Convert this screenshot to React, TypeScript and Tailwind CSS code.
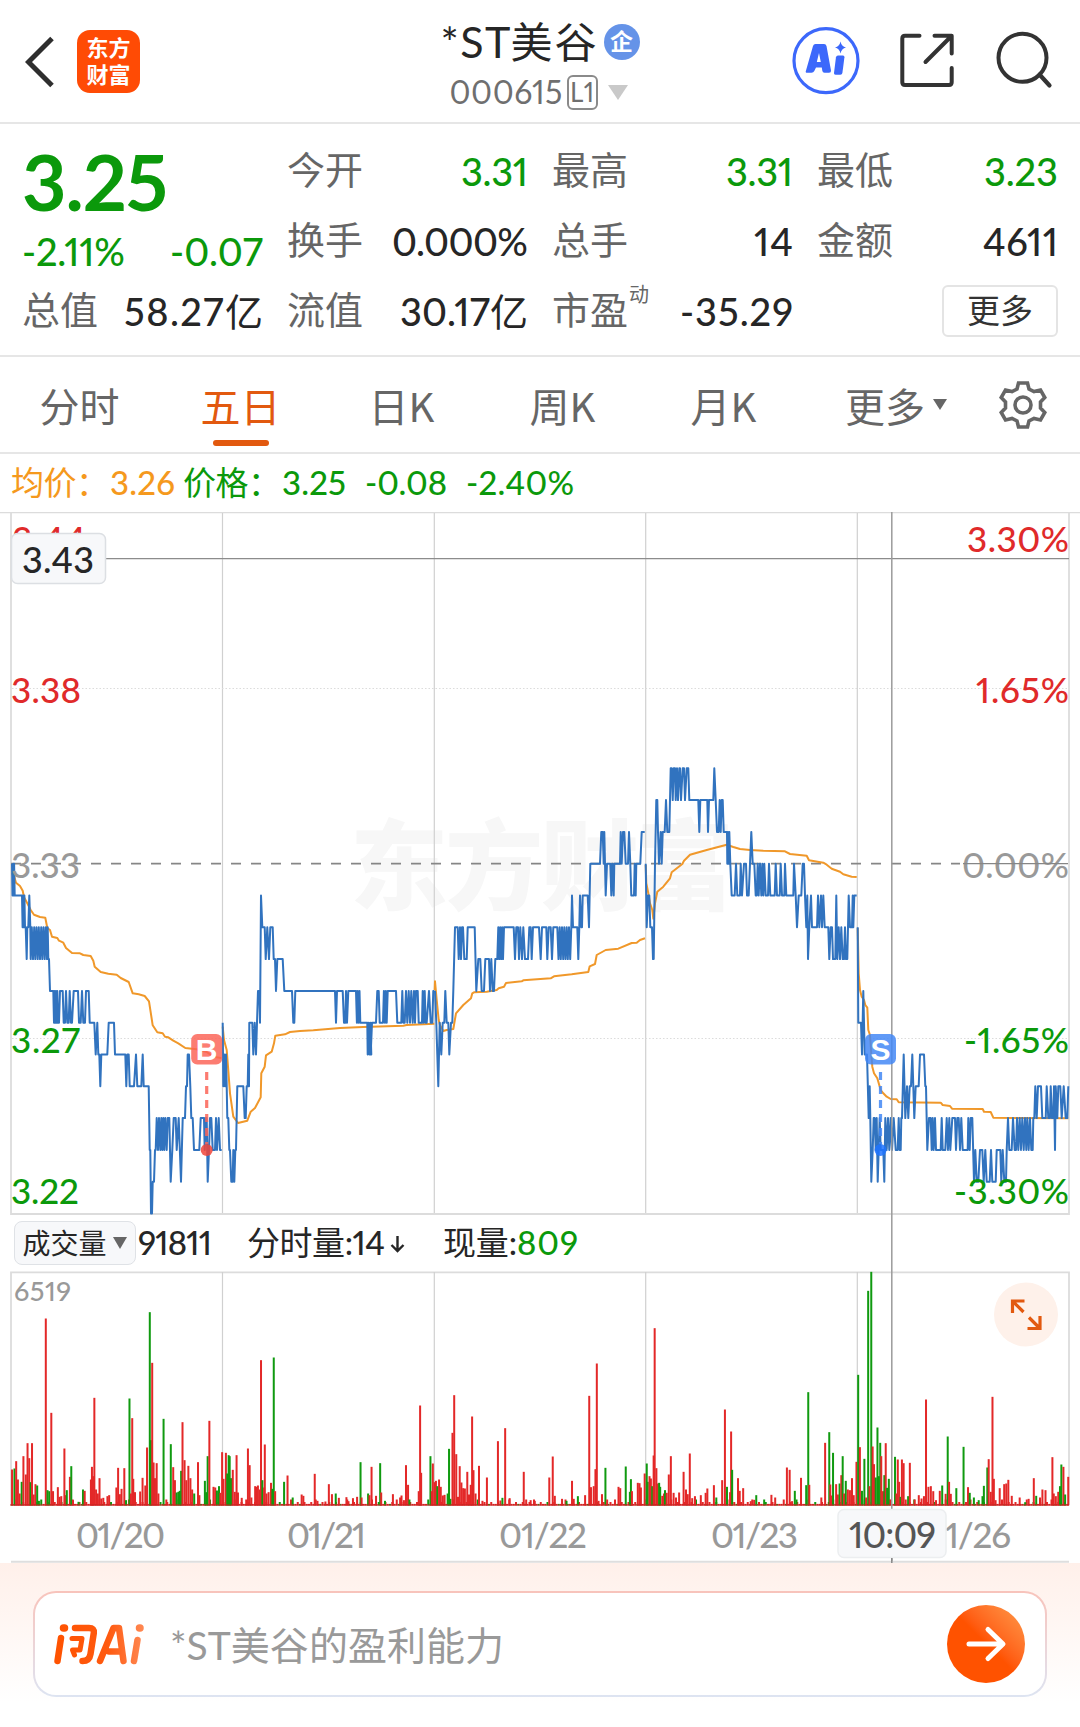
import { useLayoutEffect, useRef, type ReactNode } from 'react';

const NUM = "font-['Lato','Noto_Sans_CJK_SC',sans-serif] proportional-nums";

/* Single-line text tracked so that it fills a given width. */
function Fit({ w, weight = 'font-medium', className = '', children }: { w: number; weight?: string; className?: string; children: string }) {
  const ref = useRef<HTMLSpanElement>(null);
  useLayoutEffect(() => {
    const el = ref.current;
    if (!el) return;
    el.style.letterSpacing = '0px';
    el.style.marginRight = '0px';
    const gap = (w - el.getBoundingClientRect().width) / Math.max(1, children.length - 1);
    el.style.letterSpacing = `${gap}px`;
    el.style.marginRight = `${-gap}px`;
  }, [w, children]);
  return (
    <span ref={ref} className={`inline-block whitespace-pre ${NUM} ${weight} ${className}`}>
      {children.split(/([\u4e00-\u9fff：]+)/).map((part, i) => (i % 2 ? <span key={i} className="font-normal">{part}</span> : part))}
    </span>
  );
}

/* ---------- price series: [x, level], one level = 0.01 below 3.33 ---------- */
type P = [number, number];
const BASE = 863.7;
const STEP = 31.8;

const parse = (s: string): P[] => s.trim().split(/\s+/).map((t) => t.split(',').map(Number) as P);

const zig = (x0: number, x1: number, a: number, b: number, n: number) =>
  Array.from({ length: n + 1 }, (_, i) => `${(x0 + ((x1 - x0) * i) / n).toFixed(1)},${i % 2 ? b : a}`).join(' ');

const price: { o: number; d: string }[] = [
  {
    o: 0,
    d: `${zig(36, 44, 0, 1, 5)} 65,1 ${zig(66, 75, 1, 2, 5)} 77,2 80,3 82,2 85,2 88,1 91,2 ${zig(92, 141, 3, 2, 14)} 143,2 145,3 147,3 150,4 158,4
    ${zig(160, 174, 4, 5, 7)} 177,5 180,4 188,4 191,5 195,5 198,4 202,5 206,5 209,4 213,5 216,5 221,4 234,4 237,5 242,5 246,4 250,5 255,5 258,4 266,4 269,5 283,5 287,6 292,5 295,6 298,6 301,7 304,6 322,6 326,5 342,5 345,6
    376,6 379,7 382,6 386,6 389,7 402,7 408,6 412,7 424,7 428,6 431,7 446,7 449,9 451,9 453,11 456,11 458,10 462,10 465,9 467,9
    470,8 474,9 477,8 481,9 484,8 487,9 490,8 493,9 496,8 500,9 503,8 508,8 512,10 517,9 521,8 527,8 530,9 536,8 543,10 548,8 555,8 558,7 561,7 563,6 567,6 571,7 574,8 578,8 582,9
    598,9 602,8 612,8 614,9 617,8 620,8 623,10 627,9 630,8 634,8 638,9 645,9 648,8 651,9 656,8 660,9 665,9`,
  },
  {
    o: 0,
    d: `668,5 670,7 673,6 675,7 678,6 680,7 682,8 685,8 688,9 690,9 694,10 698,10 700,9 703,10 706,9 708,9 712,7 730,7 734,8 737,8 740,7 743,7 745,6 747,7 748,5 757,5 760,6 764,5 768,6 771,5 774,4 778,4 780,5 783,1 787,2
    794,2 797,3 802,2 807,3 811,2 818,2 821,3 825,3 828,4 832,3 848,3 853,4 876,4 880,5 883,5 886,4 1005,4 1008,5 1011,4 1028,4 1032,5 1036,5 1038,4 1041,5 1045,4 1067,4 ${zig(1068, 1081, 4, 5, 5)} 1082,5
    1102,5 ${zig(1103, 1114, 6, 5, 4)} 1112,6 1116,5 1128,5 1132,4 1136,4 1139,5 1148,5 ${zig(1149, 1163, 5, 4, 5)} 1188,4 1192,5 1204,5 1207,4 1210,5 1214,5 1218,4 1222,5 1226,4 1230,5 1234,4 1238,5 1242,4 1245,5 1248,4 1253,4 1256,5
    1266,5 1268,4 1271,5 1274,4 1277,5 1280,5 1287,4 1292,5 1297,5 1300,4 1303,4`,
  },
  {
    o: 690,
    d: `615,4 619,5 622,6 625,7 629,5 634,6 638,5 643,5 646,4 650,5 655,5 658,6 663,5 667,5 670,4 675,2 683,2 686,3 690,2 693,3 696,2 699,2 703,3 710,3 713,2 734,2 739,4 745,3 751,3 755,4 762,4 766,3 777,3 780,4 784,3 788,4 792,4 796,3 801,3
    ${zig(802, 822, 3, 2, 7)} 851,2 855,3 859,2 864,2 867,3 871,2 876,3 880,2 885,3 894,3 898,2 902,2 905,3 909,2 927,2 932,3 936,2 949,2 952,3 956,2 962,2 966,3 970,2 980,2
    ${zig(982, 1024, 2, 3, 12)} 1026,1 1029,2 1042,2 1045,3 1048,2 1050,1 1054,2 1056,2 1058,1 1073,1 1077,2 1081,0 1110,0 1114,-1 1118,-1 1121,0 1123,-1 1125,0 1127,1 1131,0 1141,0 1144,1 1147,0 1151,1 1153,0
    1170,0 1172,-1 1175,0 1179,-1 1183,-1 1187,0 1194,0 1197,-1 1201,0 1204,1 1212,1 1214,0 1217,1 1219,0 1231,0 1235,-1 1244,-1`,
  },
  {
    o: 1320,
    d: `617,0 620,2 624,1 628,1 631,2 636,2 639,3 641,3 645,0 649,-2 652,-2 654,-1 657,0 662,-1 665,0 668,-1 674,-1 678,-2 682,-1 688,-1 690,-2
    692,-3 695,-3 698,-2 701,-3 705,-3 707,-2 711,-3 714,-2 718,-3 720,-3 723,-2 728,-3 732,-3 735,-2 740,-3 745,-3 748,-2 775,-2 778,-1 781,-2 802,-2 804,-1 807,-2 820,-2 823,-3 827,-2 831,-1 836,-1 839,-2 842,-1 845,-2 848,-2 851,-1 861,-1 862,0 864,-1 866,0 868,-1 871,0 875,1 884,1 888,0 892,1 900,1 902,0 906,1
    912,0 918,0 921,1 926,1 930,0 934,-1 938,0 943,0 947,1 950,1 953,0 956,1 960,0 964,1 967,0 970,1 973,0 977,1 984,1 987,0 991,1 1004,1 1007,0 1011,1 1019,1 1022,0 1026,1 1033,1 1035,0 1039,1 1060,1 1062,0 1067,1 1071,2 1076,1
    1084,1 1088,0 1092,0 1095,1 1099,2 1102,1 1104,3 1108,2 1113,1 1116,2 1131,2 1134,1 1138,2 1143,1 1146,2 1150,1 1154,2 1165,2 1168,3 1172,2 1176,2 1179,3 1186,3 1189,1 1192,3 1196,2 1200,3 1204,2 1208,3 1212,3 1215,2 1218,3 1222,3
    1226,1 1230,2 1236,2 1238,1 1240,2 1243,1 1250,1`,
  },
  {
    o: 2460,
    d: `113,2 115,5 123,5 126,6 130,4 134,6 141,6 146,8 149,7 151,8 154,10 158,9 161,8 164,8 167,9 170,8 173,10 176,9 179,8 182,9 190,9 193,10 196,8 200,9 204,8 208,9 212,8 216,9 221,8 227,9 233,9 236,8 239,9 242,9 244,8 246,8 251,6
    256,8 261,7 265,8 269,7 273,7 277,6 283,8 287,7 296,7 300,6 312,6 316,7 318,7 322,9 327,8 332,8 335,9 338,8 341,9 345,8 348,9 362,9 365,8 368,9 376,9 380,8 384,9 388,8 391,9 397,8 405,8 408,9 412,8 416,8 420,9 424,8 428,9 443,9 445,8
    449,9 452,8 457,8 462,10 466,9 470,10 475,10 480,9 487,9 491,10 496,9 500,10 506,10 509,10 513,9 517,10 527,10 530,9 541,9 544,10 548,9 553,10 558,10 560,9 564,8 568,9 575,9 579,8 584,9 588,9 591,8 595,9 599,8 603,9 607,8 611,9 615,8
    619,9 622,8 626,9 630,8 634,9 638,9 640,8 643,8 646,7 650,8 654,7 663,7 667,8 677,8 680,7 685,8 690,8 692,7 696,8 700,8 702,7 705,9 707,7 712,8 715,7 721,7 725,8 731,7 737,8 742,8 745,7`,
  },
];

const average: { o: number; y: number; d: string }[] = [
  {
    o: 0,
    y: 840,
    d: '36,100 43,110 48,128 60,138 68,152 72,172 82,190 92,210 102,224 120,231 136,233 142,264 150,270 156,290 172,294 177,302 190,308 198,324 216,339 240,340 250,345 272,348 280,362 284,380 302,396 325,401 350,404 362,414 386,426 398,460 416,463 434,468 447,484 458,556 472,577 488,580 495,590 505,592 520,602 535,610 556,624 590,628 620,636 640,650 664,654',
  },
  {
    o: 0,
    y: 840,
    d: '668,560 672,600 680,630 684,680 690,760 700,830 714,849 742,842 752,815 765,804 782,772 784,700 794,680 798,646 815,635 822,610 826,587 855,583 870,576 900,573 940,571 1020,564 1090,561 1210,557 1220,555 1303,551',
  },
  {
    o: 690,
    y: 840,
    d: '614,450 615,424 620,480 626,540 630,556 640,573 650,570 670,567 678,520 700,495 723,475 727,460 732,457 770,455 800,450 806,445 822,440 828,429 875,424 880,421 962,415 972,409 1025,403 1075,396 1079,379 1095,372 1100,345 1127,330 1165,326 1205,309 1220,308 1230,300 1245,295',
  },
  {
    o: 1320,
    y: 740,
    d: '617,375 619,430 625,460 630,490 637,510 640,536 645,490 652,455 670,440 690,415 695,397 727,372 732,362 750,344 800,330 860,314 880,321 900,327 930,330 970,332 1035,334 1050,342 1100,347 1107,361 1150,368 1160,374 1175,386 1200,395 1210,403 1235,410 1250,411',
  },
  {
    o: 2460,
    y: 900,
    d: '113,84 116,220 120,270 125,290 132,300 136,315 142,323 145,390 150,405 153,450 157,500 162,520 172,535 182,570 190,580 200,590 212,597 230,598 236,607 362,608 368,615 390,618 396,626 488,627 492,635 512,636 520,653 745,655',
  },
];

const pts = (ps: P[]) => ps.map(([x, y]) => `${x.toFixed(1)},${y.toFixed(1)}`).join(' ');

/* ---------- volume bars: x, top, colour ---------- */
const VOL_A =
  '35,778r 42,775g 47,753r 52,808r 57,850r 63,815g 68,738r 75,793r 80,699r 85,744r 89,816g 93,699r 98,853r 103,822r 108,826g 113,872g 133,325r 138,840g 143,843g 149,608r 154,843r 168,831r 173,860r 178,858r 187,715r 190,855r 194,840g 203,800r 207,768g 212,870r 228,875g 241,838g 246,842r 264,808r 267,770r 270,798r 274,563r 279,838r 284,850r 289,804r 294,865r 300,863r 312,858r 317,855r 338,832r 343,773r 348,852r 353,836r 361,774r 366,870g 376,565g 380,850r 384,624r 387,806r 392,846r 407,844r 414,803r 422,826r 427,712r 435,306g 438,690g 442,458r 446,757r 450,804r 455,759r 460,850r 475,626g 483,868r 496,702g 503,771r 508,810r 513,847g 518,845g 522,842g 526,782g 530,636r 536,750r 541,810r 547,767r 553,804r 558,838r 564,850g 575,756r 579,855r 595,812g 599,846g 603,738g 608,632r 620,830r 625,832r 630,841g 636,828g 640,848r 645,726r 649,806r 656,728r 660,790g 664,735g 667,738g 671,804g 676,779r 682,845r 687,735r 691,847r 702,863r 715,868r 720,715r 725,765r 730,862r 741,828r 745,830r 749,826r 754,838r 758,450r 762,810g 767,832r 769,703r 774,850r 780,846r 787,818r 791,836g 795,442g 799,843r 825,815g 835,796r 850,862g 876,853r 881,857r 914,791r 922,872r 945,874r 955,822r 964,852r 975,850g 984,863r 1006,861r 1012,873r 1025,864r 1037,860r 1047,756g 1050,862r 1069,850g 1073,855r 1079,770r 1092,857r 1104,759g 1107,847r 1118,872g 1141,852r 1162,862r 1166,856r 1173,870r 1179,765r 1185,824r 1189,868g 1216,843r 1220,586r 1223,788r 1250,738g 1254,843r 1257,760r 1262,816r 1266,812r 1270,828g 1275,808r 1280,830r 1286,856r 1291,854r 1300,850g 1304,716g 1308,866g 1314,668r 1319,555r 1325,732r 1330,860r 1335,768r 1340,817r 1345,834r 1350,835r 1357,785r 1362,853r 1367,824r 1371,619r 1375,780r 1381,850r 1391,767r 1401,872r 1414,802r 1446,693r 1453,871r 1459,863g 1467,654r 1480,864r 1521,785r 1528,868r 1541,870r 1553,872r';
const VOL_B =
  '27,802r 37,739r 43,857r 64,866r 77,872g 93,812r 98,866r 110,858g 131,855r 143,557r 148,831r 156,828r 161,777r 165,460r 170,872r 180,852r 190,773g 195,868r 228,830r 233,834r 249,769g 261,845g 264,807g 267,843r 284,818r 289,819r 293,832r 304,790r 310,760g 313,815g 318,798r 322,805r 326,828g 330,736r 333,354r 338,774r 342,820r 346,818g 349,830g 355,857r 360,850r 363,840g 368,848r 374,793r 380,738r 388,848r 395,862r 404,847r 417,785r 424,838r 429,852r 435,730r 442,864r 450,858r 467,855r 481,848r 486,835r 505,825r 512,862g 529,810r 537,598r 543,830g 552,846r 555,664r 558,779g 575,804r 580,842r 590,834r 612,873r 622,869r 628,855g 651,868g 672,854r 683,862r 717,772r 725,779r 732,873r 740,842g 745,868g 758,803r 773,825g 779,546g 782,824r 817,862r 828,698r 840,666g 843,823r 847,856r 851,728g 860,822r 865,853r 870,820g 875,795r 879,738g 883,850r 888,812g 894,838r 900,840r 906,804r 911,855r 919,755r 924,494g 929,711r 935,842g 942,746g 947,862r 953,242g 957,828r 962,185g 966,709r 970,762r 975,802g 980,652g 984,798g 988,698g 991,738r 996,843r 1000,795g 1004,699r 1008,833g 1013,806g 1018,868r 1031,740g 1035,850r 1039,748r 1043,815r 1047,860g 1051,748r 1056,759r 1062,868r 1069,858g 1074,758r 1088,868r 1100,855r 1108,865r 1115,858r 1121,568r 1128,830r 1135,828r 1142,843r 1150,870r 1161,842r 1168,826g 1178,851r 1184,679g 1188,815r 1193,851r 1209,834g 1230,710g 1243,831r 1248,848g 1260,862g 1274,870g 1285,858g 1289,827g 1299,772g 1303,747r 1309,845r 1314,560r 1318,806r 1323,870r 1335,834r 1348,822r 1354,820r 1360,809r 1370,857r 1393,862r 1409,876g 1419,866r 1434,804r 1441,857g 1452,862r 1459,838r 1468,840r 1488,741r 1492,850r 1498,858r 1505,845r 1510,828g 1514,763g 1520,770r 1525,853g 1534,800r';

const volume = [VOL_A, VOL_B].flatMap((s, i) =>
  s.split(' ').map((t) => {
    const [x, r] = t.split(',');
    const h = (886 - parseInt(r, 10)) / 3;
    return { x: i * 540 + Number(x) / 2.904, h, up: r.endsWith('r') };
  }),
);
/* low-volume minutes between the recorded peaks */
const floor = Array.from({ length: 470 }, (_, i) => {
  const n = (i * 7919 + 104729) % 97;
  return { x: 12 + i * 2.25, h: n > 88 ? 6 : n > 66 ? 3.5 : 1.6, up: n % 6 !== 0 };
});

function Marker({ x, letter, box, dot }: { x: number; letter: string; box: string; dot: string }) {
  return (
    <g>
      <rect x={x - 15.5} y="1034" width="31" height="30.5" rx="6" fill={box} fillOpacity="0.84" />
      <text x={x} y="1059.5" textAnchor="middle" fontSize="30" fontWeight="700" fill="#fff" className="font-['Liberation_Sans',sans-serif]">
        {letter}
      </text>
      <path d={`M${x} 1072V1144`} stroke={box} strokeOpacity=".85" strokeWidth="3.2" strokeDasharray="8 6" />
      <circle cx={x} cy="1150" r="6" fill={dot} fillOpacity="0.85" />
    </g>
  );
}

function Label({ x, y, w, size = 35, fill, children }: { x: number; y: number; w: number; size?: number; fill: string; children: ReactNode }) {
  return (
    <text x={x} y={y} fontSize={size} fill={fill} textLength={w} className={`${NUM} font-medium`}>
      {children}
    </text>
  );
}

function Chart() {
  return (
    <svg width="1080" height="1051" viewBox="0 512 1080 1051" className="block">
      <text x="350" y="902" fontSize="98" textLength="384" fill="#f7f7f7" className="font-['Noto_Sans_CJK_SC',sans-serif] font-black">
        东方财富
      </text>

      <g fill="none" stroke="#dcdcdc">
        <path d="M0 512.5H1080" strokeWidth="1.5" />
        <path d="M11 512V1214H1069V512M11 1505V1272.3H1069V1505" strokeWidth="1.8" />
        <path d="M222.5 513V1213M434.3 513V1213M645.7 513V1213M857.3 513V1213M222.5 1272V1505M434.3 1272V1505M645.7 1272V1505M857.3 1272V1505" stroke="#d0d0d0" strokeWidth="1.2" />
        <path d="M12 688.5H1068M12 1038.5H1068" strokeDasharray="1.5 2" strokeWidth="1.2" />
      </g>
      <path d="M11 863.6H960" stroke="#868686" strokeWidth="1.8" strokeDasharray="10 10" />

      <g fill="none" strokeLinejoin="round">
        {average.map((s, i) => (
          <polyline key={i} stroke="#f0982a" strokeWidth="2" points={pts(parse(s.d).map(([x, y]) => [(x + s.o) / 3, s.y + y / 3]))} />
        ))}
        {price.map((s, i) => (
          <polyline key={i} stroke="#3173bf" strokeWidth="2" points={pts(parse(s.d).map(([x, k]) => [(x + s.o) / 3, BASE + STEP * k]))} />
        ))}
      </g>

      {[...floor, ...volume].map((b, i) => (
        <rect key={i} x={b.x - 1} y={1505.5 - b.h} width="2" height={b.h} fill={b.up ? '#e32828' : '#109a10'} />
      ))}
      <path d="M10 1505H1069" stroke="#c22020" strokeWidth="1.2" />

      <path d="M11 558.6H1069" stroke="#8c8c8c" strokeWidth="1.4" />
      <path d="M891.8 512V1562" stroke="#9b9b9b" strokeWidth="1.5" />

      <Marker x={206.7} letter="B" box="#fb6457" dot="#f04438" />
      <Marker x={880.5} letter="S" box="#4287f5" dot="#1f74ff" />

      <Label x={12} y={552} w={74} fill="#e02a2a">3.44</Label>
      <Label x={11} y={702.5} w={70} fill="#e02a2a">3.38</Label>
      <Label x={11} y={877.5} w={69} fill="#999">3.33</Label>
      <Label x={11} y={1052.5} w={69} fill="#0b990b">3.27</Label>
      <Label x={11} y={1203.5} w={68} fill="#0b990b">3.22</Label>
      <Label x={967} y={551.5} w={102} fill="#e02a2a">3.30%</Label>
      <Label x={976} y={702.5} w={93} fill="#e02a2a">1.65%</Label>
      <Label x={962} y={877.5} w={107} fill="#999">0.00%</Label>
      <Label x={964} y={1052.5} w={105} fill="#0b990b">-1.65%</Label>
      <Label x={954} y={1203.5} w={115} fill="#0b990b">-3.30%</Label>
      <path d="M963 863.6H1068" stroke="#868686" strokeWidth="1.4" />

      <rect x="11.5" y="533.5" width="94" height="50" rx="6" fill="#f7f8fa" stroke="#dcdfe3" strokeWidth="1.5" />
      <Label x={22} y={572.5} w={72} size={36} fill="#262626">3.43</Label>

      <Label x={14} y={1300.5} w={57} size={27} fill="#999">6519</Label>
      <circle cx="1026" cy="1314.5" r="32" fill="#fef1ea" />
      <path d="M1012.5 1313V1301H1024.5M1013 1301.5L1023.5 1312M1040 1316V1328.5H1027.5M1039.5 1328L1029 1317.5" fill="none" stroke="#e2590f" strokeWidth="3.2" />

      <Label x={76} y={1547.5} w={89} fill="#999">01/20</Label>
      <Label x={287} y={1547.5} w={79} fill="#999">01/21</Label>
      <Label x={499} y={1547.5} w={88} fill="#999">01/22</Label>
      <Label x={711} y={1547.5} w={87} fill="#999">01/23</Label>
      <Label x={923} y={1547.5} w={88} fill="#999">01/26</Label>
      <rect x="838" y="1509.5" width="108" height="48" rx="6" fill="#f7f8fa" stroke="#eceef0" strokeWidth="1.5" />
      <Label x={849} y={1547.5} w={87} size={36} fill="#555">10:09</Label>
      <path d="M11 1561.8H1069" stroke="#dedede" strokeWidth="2" />
      <path d="M891.8 1558V1563" stroke="#888" strokeWidth="1.5" />
    </svg>
  );
}

function Header() {
  return (
    <header className="flex h-[124px] items-start justify-between border-b-2 border-[#e6e6e6]">
      <div className="flex w-[360px] items-center pt-[30px] pl-[25px]">
        <svg width="30" height="62" viewBox="0 0 30 62" fill="none" stroke="#2e2e2e" strokeWidth="5">
          <path d="M27 7.5L3.5 31L27 54.5" />
        </svg>
        <div className="ml-[22px] flex h-[63px] w-[63px] flex-col items-center justify-center rounded-[13px] bg-[#ff4b05] pb-[3px] font-['Noto_Sans_CJK_SC',sans-serif] text-[22px] leading-[27px] font-semibold text-white">
          <span>东方</span>
          <span>财富</span>
        </div>
      </div>
      <div className="flex flex-col items-center">
        <div className="mt-[14px] flex h-[56px] items-center gap-[7px]">
          <div className="flex items-center text-[#262626]">
            <Fit w={70} weight="font-normal" className="text-[43px]">*ST</Fit>
            <Fit w={86} className="text-[42px]">美谷</Fit>
          </div>
          <div className="flex h-9 w-9 items-center justify-center rounded-full bg-[#6593e8] font-['Noto_Sans_CJK_SC',sans-serif] text-[23px] leading-none font-bold text-white">
            <span className="-mt-1">企</span>
          </div>
        </div>
        <div className="flex h-[44px] items-center pr-[3px]">
          <Fit w={113} weight="font-normal" className="text-[32px] text-[#6f6f6f]">000615</Fit>
          <span className="ml-[4px] flex h-[35px] w-[31px] items-center justify-center rounded-[6px] border-2 border-[#8a8a8a] text-[#6f6f6f]">
            <Fit w={24} weight="font-normal" className="text-[26px] leading-none">L1</Fit>
          </span>
          <svg className="ml-[10px]" width="20" height="15" viewBox="0 0 20 15" fill="#c9c9c9">
            <path d="M0 0H20L10 15Z" />
          </svg>
        </div>
      </div>
      <div className="flex w-[360px] justify-end pt-[26px] pr-[26px]">
        <svg width="264" height="70" viewBox="790 26 264 70" fill="none" strokeLinecap="round" strokeLinejoin="round">
          <circle cx="826" cy="60.7" r="32" stroke="#3c68fb" strokeWidth="3.2" />
          <path
            fillRule="evenodd"
            d="M815.500 44H824Q826 44 826.500 46L831 70.500Q831.300 72.800 829 72.800H824.500Q822.600 72.800 822.300 70.800L821.800 67.500H816L814.300 71Q813.500 72.800 811.500 72.800H807.200Q805 72.800 806 70.500L813 46Q813.600 44 815.500 44ZM819 53L816.800 62H820.800Z"
            fill="#3c68fb"
          />
          <path d="M838 55.500H843Q844.600 55.500 844.400 57.200L842.400 73Q842.100 74.800 840.300 74.800H835.500Q833.800 74.800 834 73L836 57.200Q836.300 55.500 838 55.500Z" fill="#3c68fb" />
          <path d="M840.500 41.500Q841.500 46.500 846 47.600Q841.500 48.600 840.500 53.500Q839.500 48.600 835 47.600Q839.500 46.500 840.500 41.500Z" fill="#3c68fb" />
          <path d="M919.500 35.700H905Q902.300 35.700 902.300 38.400V82.300Q902.300 85 905 85H949Q951.700 85 951.700 82.300V68M934.500 35.700H951.700V53.500M951 36.500L925.500 62" stroke="#333" strokeWidth="4" />
          <circle cx="1022.500" cy="57.800" r="24" stroke="#333" strokeWidth="4" />
          <path d="M1039.500 74.500L1049.500 85.500" stroke="#333" strokeWidth="4.200" />
        </svg>
      </div>
    </header>
  );
}

function Stat({ label, value, w, green, sup }: { label: string; value: string; w: number; green?: boolean; sup?: string }) {
  return (
    <div className="flex h-[70px] items-center justify-between">
      <span className="relative font-['Noto_Sans_CJK_SC',sans-serif] text-[38px] leading-[56px] text-[#666]">
        <span className="relative -top-[3px]">{label}</span>
        {sup && <span className="absolute top-0 left-[77px] text-[20px] leading-[22px]">{sup}</span>}
      </span>
      <Fit w={w} className={`text-[38px] leading-[56px] ${green ? 'text-[#0b990b]' : 'text-[#262626]'}`}>
        {value}
      </Fit>
    </div>
  );
}

function Quote() {
  return (
    <section className="grid h-[232px] grid-cols-4 gap-x-6 px-[22px] pt-[12px]">
      <div>
        <div className="flex h-[90px] items-end">
          <Fit w={146} weight="font-bold" className="text-[77px] leading-[90px] text-[#0b990b]">3.25</Fit>
        </div>
        <div className="flex h-[50px] items-center justify-between text-[38px] text-[#0b990b]">
          <Fit w={103}>-2.11%</Fit>
          <Fit w={93}>-0.07</Fit>
        </div>
        <Stat label="总值" value="58.27亿" w={139} />
      </div>
      <div>
        <Stat label="今开" value="3.31" w={67} green />
        <Stat label="换手" value="0.000%" w={136} />
        <Stat label="流值" value="30.17亿" w={128} />
      </div>
      <div>
        <Stat label="最高" value="3.31" w={67} green />
        <Stat label="总手" value="14" w={39} />
        <Stat label="市盈" value="-35.29" w={113} sup="动" />
      </div>
      <div>
        <Stat label="最低" value="3.23" w={74} green />
        <Stat label="金额" value="4611" w={75} />
        <div className="flex h-[70px] items-center justify-end">
          <button className="h-[52px] w-[116px] rounded-[6px] border-2 border-[#e4e4e4] pb-[3px] font-['Noto_Sans_CJK_SC',sans-serif] text-[33px] leading-none text-[#333]">更多</button>
        </div>
      </div>
    </section>
  );
}

function Tabs() {
  const tabs = ['分时', '五日', '日K', '周K', '月K'];
  return (
    <nav className="flex h-[99px] items-center border-y-2 border-[#e6e6e6] font-['Noto_Sans_CJK_SC',sans-serif] text-[40px] text-[#666]">
      {tabs.map((t, i) => (
        <div key={t} className={`relative flex h-full w-[161px] items-center justify-center pr-[2px] ${i === 1 ? 'text-[#e2590f]' : ''}`}>
          {t}
          {i === 1 && <span className="absolute bottom-[6px] left-[52px] h-[6px] w-[56px] rounded-full bg-[#e2590f]" />}
        </div>
      ))}
      <div className="ml-[40px] flex items-center">
        更多
        <svg className="ml-[8px]" width="14" height="11" viewBox="0 0 14 11" fill="#666">
          <path d="M0 0H14L7 11Z" />
        </svg>
      </div>
      <svg className="ml-[52px]" width="48" height="48" viewBox="-24 -24 48 48" fill="none" stroke="#666" strokeWidth="3.6">
        <path d="M-4.500 -22H4.500L6 -16L11 -13.500L17.500 -15L21.800 -7.500L17.500 -3V3L21.800 7.500L17.500 15L11 13.500L6 16L4.500 22H-4.500L-6 16L-11 13.500L-17.500 15L-21.800 7.500L-17.500 3V-3L-21.800 -7.500L-17.500 -15L-11 -13.500L-6 -16Z" />
        <circle r="8" />
      </svg>
    </nav>
  );
}

export default function App() {
  return (
    <main className="relative h-[1727px] w-[1080px] overflow-hidden bg-white">
      <Header />
      <Quote />
      <div className="-mt-px">
        <Tabs />
      </div>
      <div className="flex h-[58px] items-center pl-[11px] text-[33px] text-[#0b990b]">
        <Fit w={98} className="text-[#f5991d]">均价：</Fit>
        <Fit w={65} className="ml-px text-[#f5991d]">3.26</Fit>
        <Fit w={98} className="ml-[8px]">价格：</Fit>
        <Fit w={64} className="ml-px">3.25</Fit>
        <Fit w={82} className="ml-[19px]">-0.08</Fit>
        <Fit w={108} className="ml-[19px]">-2.40%</Fit>
      </div>

      <div className="relative">
        <Chart />
        <div className="absolute top-[708px] left-[14px] flex h-[45px] items-center text-[33px] text-[#262626]">
          <div className="flex h-[44px] w-[122px] items-center justify-center rounded-[8px] border border-[#dfe2e6] bg-[#f7f8fa]">
            <Fit w={84} className="text-[28px]">成交量</Fit>
            <svg className="ml-[7px]" width="14" height="12" viewBox="0 0 14 12" fill="#666">
              <path d="M0 0H14L7 12Z" />
            </svg>
          </div>
          <Fit w={74} className="ml-[2px]">91811</Fit>
          <Fit w={138} className="ml-[35px]">分时量:14</Fit>
          <svg className="ml-[5px] mt-[3px]" width="15" height="17" viewBox="0 0 15 17" fill="none" stroke="#262626" strokeWidth="2.4">
            <path d="M7.500 0V15M1.500 9L7.500 15L13.500 9" />
          </svg>
          <Fit w={74} className="ml-[38px]">现量:</Fit>
          <Fit w={61} className="text-[#0b990b]">809</Fit>
        </div>
      </div>

      <footer className="h-[164px] bg-linear-to-b from-[#fff0ea] to-white to-85% px-[33px] pt-[28px]">
        <div className="rounded-[23px] bg-linear-to-b from-[#f8c3bb] to-[#dde4f2] p-[2px]">
          <div className="flex h-[102px] items-center justify-between rounded-[21px] bg-white pr-[20px] pl-[18px]">
            <div className="flex items-center">
              <svg width="92" height="44" viewBox="54 1622 92 44" fill="none" strokeLinecap="round" strokeLinejoin="round">
                <defs>
                  <linearGradient id="ask" x1="54" y1="0" x2="146" y2="0" gradientUnits="userSpaceOnUse">
                    <stop stopColor="#ff5200" />
                    <stop offset=".6" stopColor="#ff5a10" />
                    <stop offset="1" stopColor="#ff8a55" />
                  </linearGradient>
                </defs>
                <g stroke="url(#ask)" strokeWidth="6.5">
                  <path d="M62 1638L58.500 1661M76 1628H90Q95.500 1628 94.800 1633L91.500 1654Q90.500 1661 83.500 1661" />
                  <path d="M64.500 1628L65.500 1628" strokeWidth="7.5" />
                  <path d="M73 1638.500H83L81 1650H73.500L75.500 1655" strokeWidth="5" />
                  <path d="M101 1661L114.500 1628H120L124.500 1661M110 1651.500H122" />
                  <path d="M138.500 1640L135 1661" />
                  <path d="M140.500 1628L141 1628" strokeWidth="7.5" />
                </g>
              </svg>
              <Fit w={334} weight="font-normal" className="mt-[3px] ml-[25px] text-[39px] text-[#999]">*ST美谷的盈利能力</Fit>
            </div>
            <div className="flex h-[78px] w-[78px] items-center justify-center rounded-full bg-linear-to-tr from-[#ff5200] from-50% to-[#ff9a48]">
              <svg width="42" height="38" viewBox="0 0 42 38" fill="none" stroke="#fff" strokeWidth="5" strokeLinecap="round" strokeLinejoin="round">
                <path d="M4 19H37M23 4.500L38 19L23 33.500" />
              </svg>
            </div>
          </div>
        </div>
      </footer>
    </main>
  );
}
